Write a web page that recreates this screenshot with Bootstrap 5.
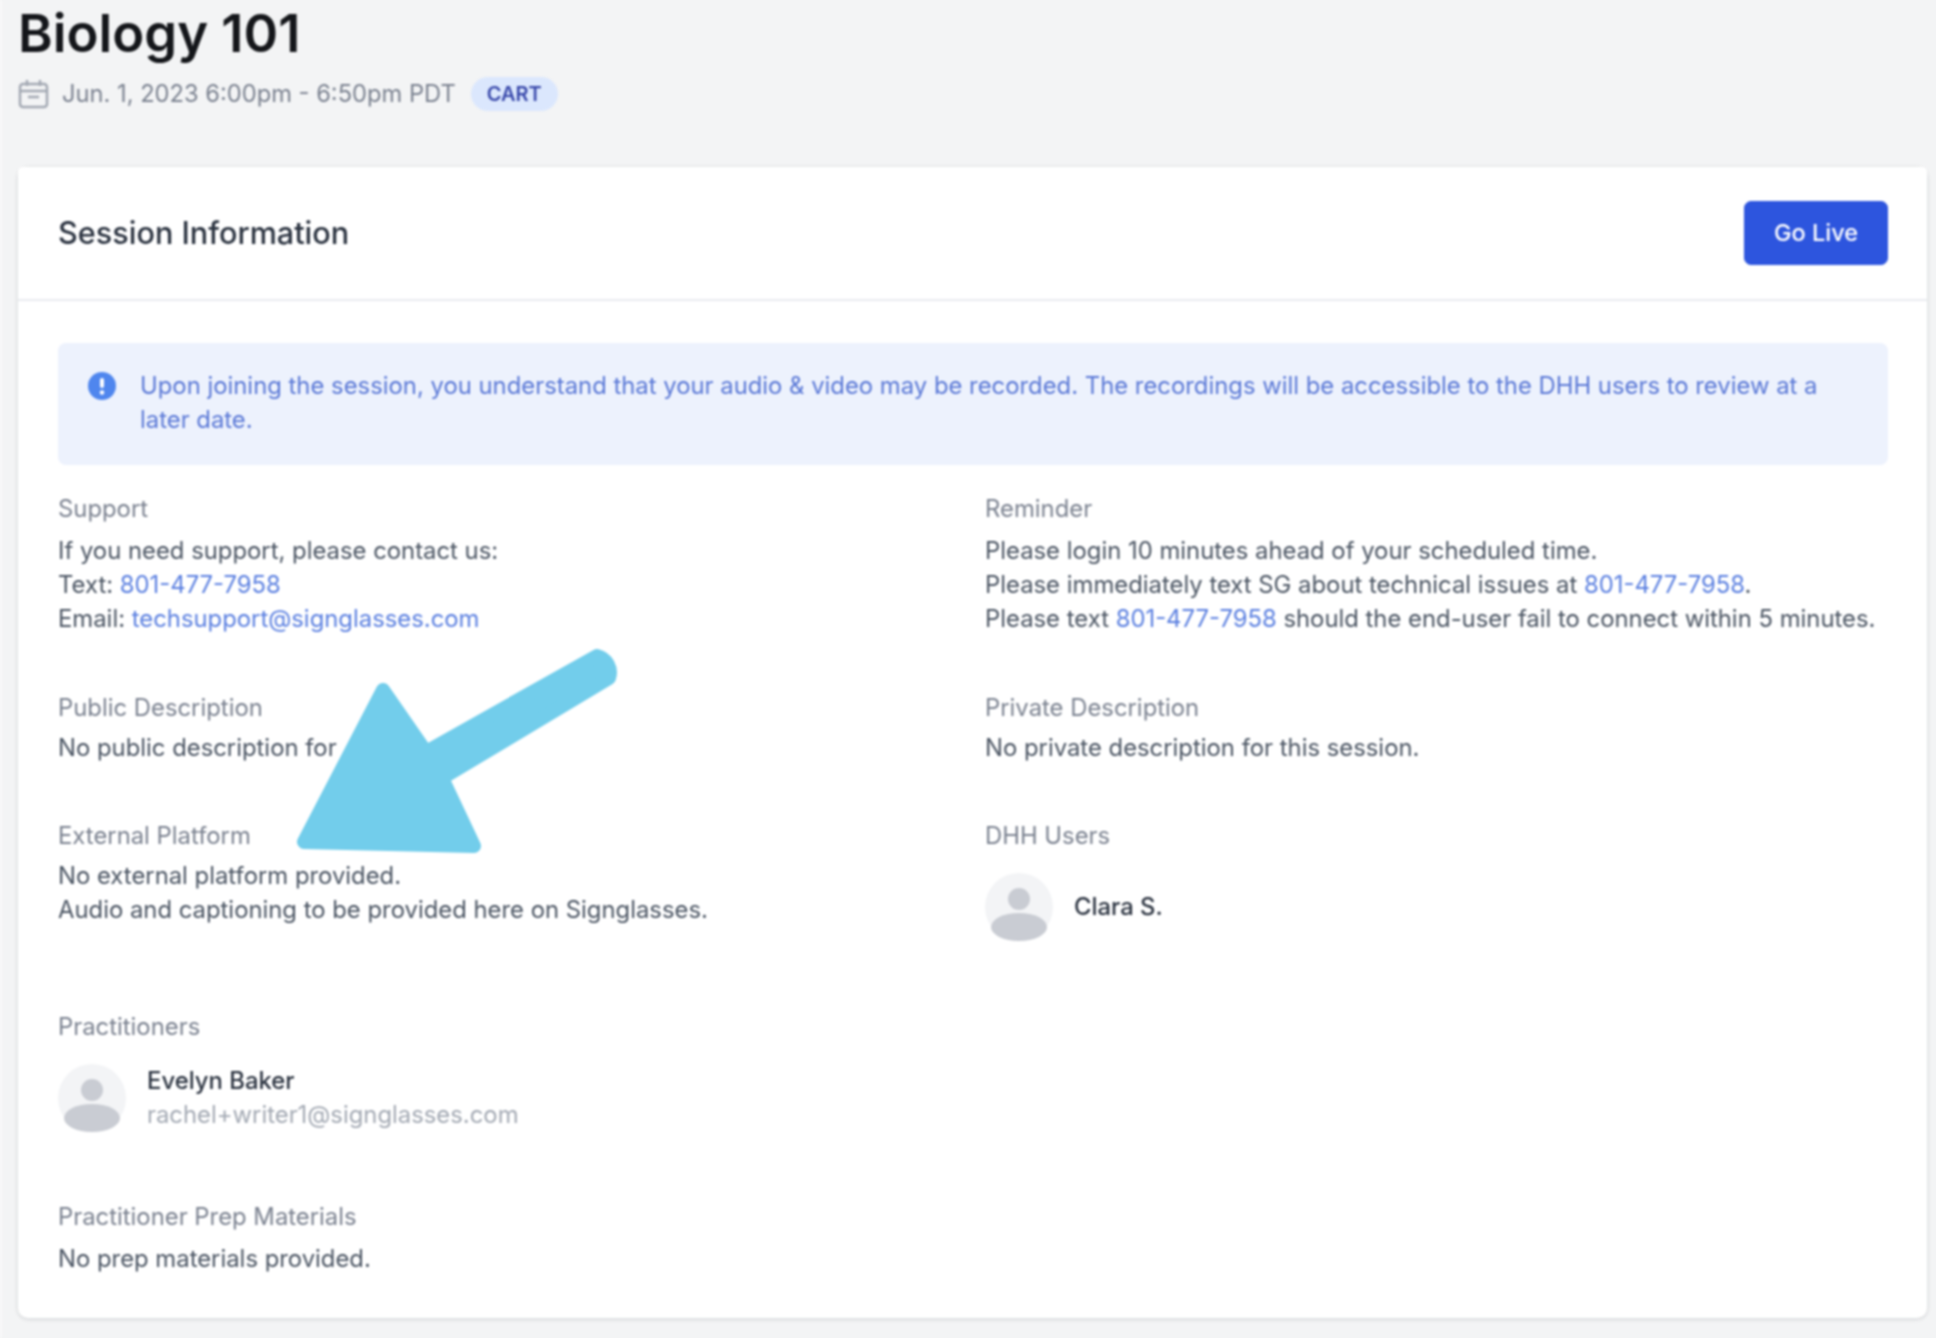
<!DOCTYPE html>
<html lang="en">

<head>
    <meta charset="UTF-8">
    <meta name="viewport" content="width=device-width, initial-scale=1.0">
    <link href="https://cdn.jsdelivr.net/npm/bootstrap@5.3.3/dist/css/bootstrap.min.css" rel="stylesheet">
    <title>Biology 101</title>

    <style>
        html, body { height: 100%; }

        body {
            background: #f3f4f5;
            font-family: Inter, "Liberation Sans", sans-serif;
            font-size: 23.85px;
            line-height: 34px;
            color: #4b5563;
            overflow: hidden;
        }

        .page-wrap {
            position: relative;
            height: 1338px;
            padding: 0 9px 0 16px;
            border-left: 2px solid #fafafa;
            filter: blur(.8px);
        }

        .page-title {
            font-size: 52.6px;
            font-weight: 600;
            line-height: 58px;
            margin: 0;
            padding-top: 4px;
            color: #14161a;
        }

        .date-row {
            height: 34px;
            margin-top: 15px;
            margin-bottom: 56px;
            color: #7b8290;
            font-size: 23.7px;
        }

        .cal-icon { width: 31px; height: 30px; margin-right: 13px; }

        .cart-pill {
            background: #dbe7fd;
            color: #3949ab;
            font-size: 20px;
            font-weight: 600;
            line-height: 34px;
            padding: 0 16px;
            margin-left: 15px;
            border-radius: 17px;
        }

        .info-card {
            border: 0;
            border-radius: 10px;
            box-shadow: 0 1px 4px rgba(17, 24, 39, .16);
        }

        .info-head {
            height: 134px;
            padding: 0 39px 0 40px;
            background: #fff;
            border-bottom: 2px solid #e9ebef;
        }

        .head-title {
            font-size: 30.6px;
            font-weight: 500;
            color: #2b3340;
            margin: 0;
        }

        .golive-btn {
            width: 144px;
            height: 64px;
            background: #2d55de;
            border-color: #2d55de;
            border-radius: 7px;
            font-size: 23.5px;
            font-weight: 500;
            padding: 0;
        }

        .info-body { padding: 42px 39px 42px 40px; }

        .notice {
            background: #edf2fd;
            border: 0;
            border-radius: 8px;
            color: #5a78d6;
            padding: 26px 40px 28px 30px;
            margin-bottom: 27px;
            gap: 24px;
        }

        .notice-icon { width: 28px; height: 28px; margin-top: 3px; }

        .field-label { color: #7b8290; margin-bottom: 6px; }

        .field-text a { color: #5a7fe0; text-decoration: none; }

        .field-row { margin-bottom: 54px; }

        .field-row-first { margin-bottom: 55px; }

        .avatar-svg { width: 68px; height: 68px; }

        .person-row { gap: 21px; }

        .dhh-person { margin-top: 20px; padding-bottom: 15px; }

        .prac-person { margin-top: 20px; margin-bottom: 68px; }

        .person-name { font-weight: 500; color: #2b3340; }

        .person-mail { color: #a3a9b3; }

        .pointer-arrow {
            position: absolute;
            left: -2px;
            top: 0;
            width: 1936px;
            height: 1338px;
            pointer-events: none;
        }
    </style>

</head>

<body>
    <div class="page-wrap">
        <h1 class="page-title">Biology 101</h1>
        <div class="date-row d-flex align-items-center">
            <svg class="cal-icon" viewBox="0 0 31 30" fill="none" stroke="#a3a9b3" stroke-width="2.5">
                <rect x="2" y="5" width="27" height="23" rx="3"></rect>
                <path d="M2 12h27M9 1v6M22 1v6M10 18h11"></path>
            </svg>
            <span>Jun. 1, 2023 6:00pm - 6:50pm PDT</span>
            <span class="cart-pill">CART</span>
        </div>

        <div class="card info-card">
            <div class="card-header info-head d-flex align-items-center justify-content-between">
                <h2 class="head-title">Session Information</h2>
                <button type="button" class="btn btn-primary golive-btn">Go Live</button>
            </div>
            <div class="card-body info-body">
                <div class="alert notice d-flex align-items-start">
                    <svg class="notice-icon flex-shrink-0" viewBox="0 0 28 28">
                        <circle cx="14" cy="14" r="14" fill="#4f86ee"></circle>
                        <rect x="12" y="6" width="4" height="10" rx="2" fill="#fff"></rect>
                        <circle cx="14" cy="20.5" r="2.2" fill="#fff"></circle>
                    </svg>
                    <div>Upon joining the session, you understand that your audio &amp; video may be recorded. The recordings will be accessible to the DHH users to review at a later date.</div>
                </div>

                <div class="row field-row-first">
                    <div class="col-6">
                        <div class="field-label mb-2">Support</div>
                        <div class="field-text">If you need support, please contact us:<br>Text: <a href="#">801-477-7958</a><br>Email: <a href="#">techsupport@signglasses.com</a></div>
                    </div>
                    <div class="col-6">
                        <div class="field-label mb-2">Reminder</div>
                        <div class="field-text">Please login 10 minutes ahead of your scheduled time.<br>Please immediately text SG about technical issues at <a href="#">801-477-7958</a>.<br>Please text <a href="#">801-477-7958</a> should the end-user fail to connect within 5 minutes.</div>
                    </div>
                </div>

                <div class="row field-row">
                    <div class="col-6">
                        <div class="field-label">Public Description</div>
                        <div class="field-text">No public description for</div>
                    </div>
                    <div class="col-6">
                        <div class="field-label">Private Description</div>
                        <div class="field-text">No private description for this session.</div>
                    </div>
                </div>

                <div class="row field-row">
                    <div class="col-6">
                        <div class="field-label">External Platform</div>
                        <div class="field-text">No external platform provided.<br>Audio and captioning to be provided here on Signglasses.</div>
                    </div>
                    <div class="col-6">
                        <div class="field-label">DHH Users</div>
                        <div class="d-flex align-items-center person-row dhh-person">
                            <svg class="avatar-svg" viewBox="0 0 68 68">
                                <circle cx="34" cy="34" r="34" fill="#f3f4f6"></circle>
                                <circle cx="34" cy="26" r="11" fill="#c9ccd3"></circle>
                                <ellipse cx="34" cy="54" rx="28" ry="14" fill="#c9ccd3"></ellipse>
                            </svg>
                            <span class="person-name">Clara S.</span>
                        </div>
                    </div>
                </div>

                <div class="field-label">Practitioners</div>
                <div class="d-flex align-items-center person-row prac-person">
                    <svg class="avatar-svg" viewBox="0 0 68 68">
                        <circle cx="34" cy="34" r="34" fill="#f3f4f6"></circle>
                        <circle cx="34" cy="26" r="11" fill="#c9ccd3"></circle>
                        <ellipse cx="34" cy="54" rx="28" ry="14" fill="#c9ccd3"></ellipse>
                    </svg>
                    <div>
                        <div class="person-name">Evelyn Baker</div>
                        <div class="person-mail">rachel+writer1@signglasses.com</div>
                    </div>
                </div>

                <div class="field-label mb-2">Practitioner Prep Materials</div>
                <div class="field-text">No prep materials provided.</div>
            </div>
        </div>

        <svg class="pointer-arrow" viewBox="0 0 1936 1338">
            <path d="M383 690 L304 842 L474 846 L442 778 L609 678 A17 17 0 0 0 597 656 L426 752 Z" fill="#72cdeb" stroke="#72cdeb" stroke-width="14" stroke-linejoin="round"></path>
        </svg>
    </div>

    <script src="https://cdn.jsdelivr.net/npm/bootstrap@5.3.3/dist/js/bootstrap.bundle.min.js"></script>
</body>

</html>
